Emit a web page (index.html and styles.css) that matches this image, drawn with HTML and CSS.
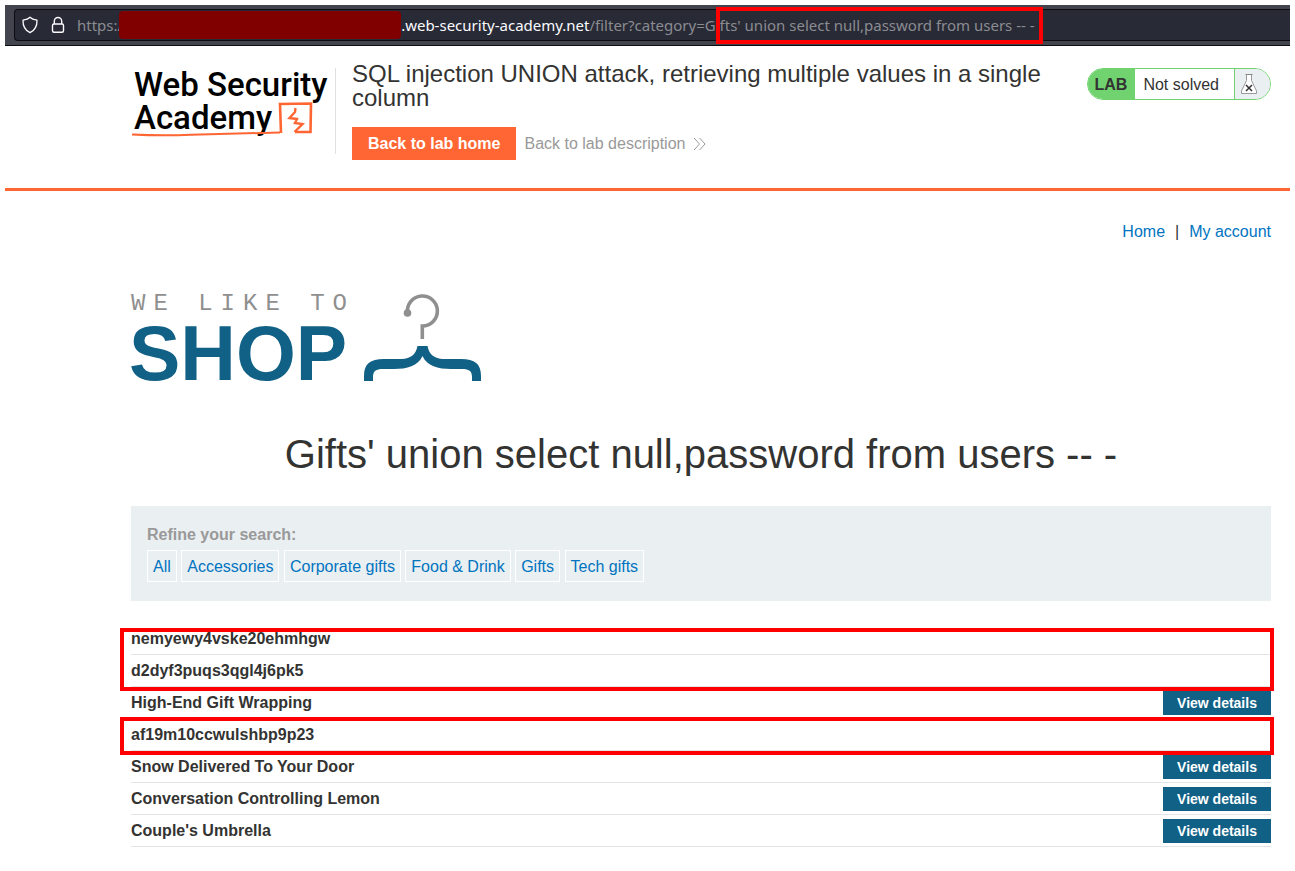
FILE: index.html
```html
<!DOCTYPE html>
<html lang="en">
<head>
<meta charset="utf-8">
<meta name="viewport" content="width=device-width, initial-scale=1">
<title>SQL injection UNION attack, retrieving multiple values in a single column</title>
<link rel="stylesheet" href="styles.css">
</head>
<body>
<div class="toolbar">
  <div class="address">
    <svg class="address-icon" width="18" height="18" viewBox="0 0 18 18" fill="none" stroke="#fbfbfe" stroke-width="1.3" stroke-linejoin="round" aria-hidden="true"><path d="M9 1.2Q11 3.3 16 4.2C16.200 10.500 13.500 14.500 9 16.700C4.500 14.500 1.800 10.500 2 4.200Q7 3.300 9 1.200Z"/></svg>
    <svg class="address-icon" width="18" height="18" viewBox="0 0 18 18" fill="none" stroke="#fbfbfe" stroke-width="1.4" aria-hidden="true"><rect x="3.500" y="8" width="11" height="8.300" rx="1.500"/><path d="M5.300 8V5.200a3.700 3.700 0 0 1 7.400 0V8"/></svg>
    <p class="url"><span>https:/</span><span class="redacted"></span><span class="host">.web-security-academy.net</span><span>/filter?category=Gi</span><span class="marked">fts' union select null,password from users -- -</span></p>
  </div>
</div>

<header class="lab-header">
  <a class="academy-logo" href="#" aria-label="Web Security Academy">
    <svg width="200" height="76" viewBox="0 0 200 76">
      <g class="academy-name"><text x="3" y="28">Web Security</text><text x="3" y="61">Academy</text></g>
      <g fill="none" stroke="#ff6633">
        <path stroke-width="2" d="M1 66.500Q30 68 60 66.800L149 64.500"/>
        <path stroke-width="2.600" d="M150 65L149 36L180 35.500L179.500 64L164 64"/>
        <path stroke-width="2.400" d="M164.500 40L164 44L158.500 50L166 51L164 55L171.500 56L163.500 64"/>
      </g>
    </svg>
  </a>
  <div class="lab-title">
    <h2>SQL injection UNION attack, retrieving multiple values in a single column</h2>
    <div class="lab-links">
      <a class="lab-home" href="#">Back to lab home</a>
      <a class="lab-description" href="#">Back to lab description
        <svg width="13" height="14" viewBox="0 0 13 14" fill="none" stroke="#999" aria-hidden="true"><path d="M1 1L6.500 7L1 13M6.500 1L12 7L6.500 13"/></svg>
      </a>
    </div>
  </div>
  <div class="lab-status">
    <span class="lab-tag">LAB</span>
    <span class="lab-state">Not solved</span>
    <span class="lab-flask">
      <svg width="18" height="22" viewBox="0 0 18 22" fill="none" aria-hidden="true"><path fill="#fff" stroke="#999" d="M6.500 1.500V7.500L1.500 18V20.500H16.500V18L11.500 7.500V1.500"/><path stroke="#888" d="M5.500 1.500H12.500"/><path stroke="#333" stroke-width="1.500" d="M6 12L12 18M12 12L6 18"/></svg>
    </span>
  </div>
</header>

<main class="shop">
  <nav class="top-links"><a href="#">Home</a><span>|</span><a href="#">My account</a></nav>
  <svg class="shop-logo" width="352" height="92" viewBox="0 0 352 92" role="img" aria-label="We like to shop">
    <text class="logo-small" x="0" y="18">WE LIKE TO</text>
    <text class="logo-large" x="-2" y="88">SHOP</text>
    <circle cx="276.500" cy="21" r="3.800" fill="#8f8f8f"/>
    <path fill="none" stroke="#8f8f8f" stroke-width="3.600" d="M276.500 21A15 15 0 1 1 291.300 34V47"/>
    <path fill="#116085" d="M286.500 54H296.500C298 63 304 66.500 312 67L330 67C344 67 350 72 350 84V89H341V85C341 79 338 77 331 77H320C307 77 296 74 291.500 64C287 74 276 77 263 77H252C245 77 242 79 242 85V89H233V84C233 72 239 67 253 67L271 67C279 66.500 285 63 286.500 54Z"/>
  </svg>
  <h1>Gifts' union select null,password from users -- -</h1>

  <section class="filters">
    <p class="filters-label">Refine your search:</p>
    <a href="#">All</a>
    <a href="#">Accessories</a>
    <a href="#">Corporate gifts</a>
    <a href="#">Food &amp; Drink</a>
    <a href="#">Gifts</a>
    <a href="#">Tech gifts</a>
  </section>

  <div class="results">
    <table>
      <tbody>
        <tr><th scope="row">nemyewy4vske20ehmhgw</th><td></td></tr>
        <tr><th scope="row">d2dyf3puqs3qgl4j6pk5</th><td></td></tr>
        <tr><th scope="row">High-End Gift Wrapping</th><td><a href="#">View details</a></td></tr>
        <tr><th scope="row">af19m10ccwulshbp9p23</th><td></td></tr>
        <tr><th scope="row">Snow Delivered To Your Door</th><td><a href="#">View details</a></td></tr>
        <tr><th scope="row">Conversation Controlling Lemon</th><td><a href="#">View details</a></td></tr>
        <tr><th scope="row">Couple's Umbrella</th><td><a href="#">View details</a></td></tr>
      </tbody>
    </table>
    <div class="callout callout-first"></div>
    <div class="callout callout-second"></div>
  </div>
</main>
</body>
</html>
```

FILE: styles.css
```css
* {
  box-sizing: border-box;
}

body {
  margin: 0;
  padding: 5px;
  background: #fff;
  color: #333332;
  font: 16px/20px "Liberation Sans", Arial, sans-serif;
}

a {
  color: #0074bf;
  text-decoration: none;
}

h1,
h2,
p {
  margin: 0;
  font-weight: normal;
}

/* Browser address bar */
.toolbar {
  padding: 4px 0 4px 9px;
  background: #42454e;
  border-bottom: 1px solid #0c0c12;
}

.address {
  display: flex;
  align-items: center;
  height: 32px;
  padding-left: 6px;
  background: #282a36;
  border: 1px solid #0c0c12;
  border-right: 0;
  border-radius: 4px 0 0 4px;
}

.address-icon {
  flex: none;
  margin-right: 10px;
}

.url {
  display: flex;
  align-items: center;
  color: #8b8c91;
  font: 15px/28px "Noto Sans", sans-serif;
  white-space: pre;
}

.host {
  color: #fbfbfe;
}

.redacted {
  width: 282px;
  height: 28px;
  margin-left: -4px;
  background: #800000;
  border-radius: 4px;
}

.marked {
  position: relative;
}

.marked::after {
  content: "";
  position: absolute;
  inset: -4px -8px -5px -4px;
  border: 4px solid #f00;
}

/* Lab banner */
.lab-header {
  display: flex;
  align-items: flex-start;
  padding: 16px 19px 28px 126px;
  border-bottom: 3px solid #ff6633;
}

.academy-logo {
  flex: none;
  width: 205px;
  height: 86px;
  margin-top: 6px;
  border-right: 1px solid #e0e0e0;
}

.academy-logo svg {
  display: block;
  overflow: visible;
}

.academy-name {
  fill: #000;
  font: 500 33px Roboto, sans-serif;
}

.lab-title {
  flex: 1;
  padding: 0 16px;
}

.lab-title h2 {
  max-width: 720px;
  font-size: 24px;
  line-height: 24px;
}

.lab-links {
  display: flex;
  align-items: center;
  gap: 8px;
  margin-top: 17px;
}

.lab-home {
  padding: 7px 16px 6px;
  background: #ff6633;
  color: #fff;
  font-weight: bold;
}

.lab-description {
  display: flex;
  align-items: center;
  gap: 8px;
  color: #999;
}

.lab-status {
  display: flex;
  flex: none;
  align-items: stretch;
  height: 32px;
  margin-top: 6px;
  overflow: hidden;
  border: 1px solid #70d36f;
  border-radius: 16px;
  line-height: 32px;
}

.lab-tag {
  padding: 0 8px 0 7px;
  background: #70d36f;
  font-weight: bold;
}

.lab-state {
  padding: 0 15px 0 8px;
}

.lab-flask {
  display: flex;
  align-items: center;
  width: 36px;
  padding-left: 5px;
  background: #eaeff2;
  border-left: 1px solid #70d36f;
}

/* Shop page */
.shop {
  padding: 31px 19px 18px 126px;
}

.top-links {
  display: flex;
  justify-content: flex-end;
  gap: 10px;
}

.shop-logo {
  display: block;
  margin-top: 50px;
  overflow: visible;
}

.logo-small {
  fill: #8f8f8f;
  font: 24px "Liberation Mono", monospace;
  letter-spacing: 8px;
}

.logo-large {
  fill: #116085;
  font: bold 77px "Liberation Sans", Arial, sans-serif;
}

h1 {
  margin: 46px 0 28px;
  font-size: 40px;
  line-height: 48px;
  text-align: center;
}

.filters {
  padding: 19px 16px;
  background: #eaeff2;
}

.filters-label {
  margin-bottom: 5px;
  color: #999;
  font-weight: bold;
}

.filters a {
  display: inline-block;
  padding: 6px 5px 4px;
  border: 1px solid #fff;
  vertical-align: top;
}

.results {
  position: relative;
  margin-top: 22px;
}

.results table {
  width: 100%;
  border-collapse: separate;
  border-spacing: 0;
}

.results th,
.results td {
  height: 32px;
  padding: 0;
  border-bottom: 1px solid #e4e4e4;
  text-align: left;
}

.results td {
  width: 108px;
}

.results td a {
  display: block;
  background: #116085;
  color: #fff;
  font-size: 14px;
  font-weight: bold;
  line-height: 24px;
  text-align: center;
}

.callout {
  position: absolute;
  left: -11px;
  right: -3px;
  border: 4px solid #f00;
}

.callout-first {
  top: 5px;
  height: 63px;
}

.callout-second {
  top: 94px;
  height: 38px;
}
```
